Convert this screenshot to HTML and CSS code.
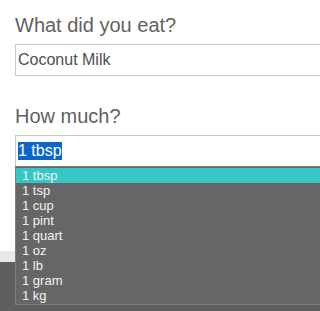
FILE: index.html
```html
<!DOCTYPE html>
<html>
<head>
<meta charset="utf-8">
<link rel="stylesheet" href="styles.css">
</head>
<body>
<div class="page">
  <div class="field">
    <div class="label">What did you eat?</div>
    <div class="input">Coconut Milk</div>
  </div>
  <div class="field">
    <div class="label">How much?</div>
    <div class="input"><span class="sel">1 tbsp</span></div>
  </div>
</div>
<div class="strip"></div>
<div class="dark"></div>
<ul class="dropdown">
  <li class="active">1 tbsp</li>
  <li>1 tsp</li>
  <li>1 cup</li>
  <li>1 pint</li>
  <li>1 quart</li>
  <li>1 oz</li>
  <li>1 lb</li>
  <li>1 gram</li>
  <li>1 kg</li>
</ul>
</body>
</html>
```
FILE: styles.css
```css
html, body {
  margin: 0;
  padding: 0;
  overflow: hidden;
  height: 100%;
  font-family: "Liberation Sans", Arial, sans-serif;
}
body {
  background: #5f5f5f;
  position: relative;
}
.page {
  background: #fff;
  height: 251px;
  box-sizing: border-box;
  padding: 14px 0 0 15px;
  display: flex;
  flex-direction: column;
  gap: 29px;
}
.field {
  display: flex;
  flex-direction: column;
  gap: 7px;
}
.label {
  font-size: 20px;
  line-height: 23px;
  color: #616161;
  white-space: nowrap;
}
.input {
  height: 32px;
  box-sizing: border-box;
  border: 1px solid #c9c9c9;
  border-right: none;
  padding: 0 2px;
  display: flex;
  align-items: center;
  font-size: 16px;
  color: #505050;
  white-space: nowrap;
  overflow: hidden;
}
.sel {
  background: #0c66c8;
  color: #fff;
}
.strip {
  height: 11px;
  background: #e8e8e8;
}
.dark {
  height: 49px;
  background: #5f5f5f;
}
.dropdown {
  position: absolute;
  top: 166px;
  left: 15px;
  right: 0;
  margin: 0;
  padding: 1px 0;
  list-style: none;
  background: #666666;
  border: 1px solid #7e7e7e;
  border-right: none;
}
.dropdown li {
  font-size: 13px;
  line-height: 15px;
  height: 15px;
  padding-left: 6px;
  color: #f3f3f3;
  white-space: nowrap;
}
.dropdown li.active {
  background: #35c6c6;
}
```
